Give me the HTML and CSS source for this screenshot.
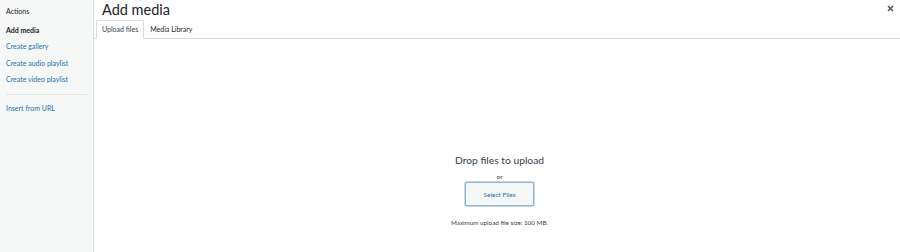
FILE: index.html
```html
<!DOCTYPE html>
<html lang="en">
<head>
  <meta charset="UTF-8" />
  <title>Add media</title>
  <link rel="stylesheet" href="styles.css">
</head>
<body>
  <div class="modal">
    <aside class="menu">
      <h3 class="menu-heading">Actions</h3>
      <a class="menu-item active">Add media</a>
      <a class="menu-item">Create gallery</a>
      <a class="menu-item">Create audio playlist</a>
      <a class="menu-item">Create video playlist</a>
      <div class="separator"></div>
      <a class="menu-item">Insert from URL</a>
    </aside>

    <section class="frame">
      <div class="frame-title">
        <h1>Add media</h1>
        <button class="close" aria-label="Close">
          <svg width="7" height="7" viewBox="0 0 7 7"><path d="M1 1L6 6M6 1L1 6" stroke="#555" stroke-width="1.6"/></svg>
        </button>
      </div>
      <nav class="tabs">
        <a class="tab active">Upload files</a>
        <a class="tab">Media Library</a>
      </nav>
      <div class="uploader">
        <p class="drop-title">Drop files to upload</p>
        <p class="or">or</p>
        <button class="select-btn">Select Files</button>
        <p class="max-size">Maximum upload file size: 100 MB.</p>
      </div>
    </section>
  </div>
</body>
</html>
```

FILE: styles.css
```css
* {
  box-sizing: border-box;
}

body {
  margin: 0;
  font-family: Lato, sans-serif;
  color: #1d2327;
  background: #fff;
}

.modal {
  display: flex;
  height: 252px;
}

.menu {
  width: 94px;
  flex-shrink: 0;
  background: #f6f7f7;
  border-right: 1px solid #dcdcde;
  padding: 6px 0 0;
  display: flex;
  flex-direction: column;
}

.menu-heading {
  margin: 0 0 6px;
  padding: 0 6px;
  font-size: 7px;
  font-weight: 400;
  line-height: 10px;
  color: #1d2327;
}

.menu-item {
  display: block;
  padding: 2.5px 6px;
  font-size: 7px;
  line-height: 11.5px;
  color: #2271b1;
}

.menu-item.active {
  color: #1d2327;
  font-weight: 700;
}

.separator {
  height: 1px;
  background: #e2e4e7;
  margin: 6px 6px 5px;
}

.frame {
  flex: 1;
  display: flex;
  flex-direction: column;
}

.frame-title {
  display: flex;
  justify-content: space-between;
  align-items: flex-start;
  padding: 0 6px 0 8px;
}

.frame-title h1 {
  margin: 0;
  font-size: 14.5px;
  font-weight: 400;
  line-height: 20px;
  color: #1d2327;
}

.close {
  border: none;
  background: none;
  padding: 0;
  margin-top: 5px;
  line-height: 0;
}

.tabs {
  display: flex;
  padding: 0 0 0 2px;
  border-bottom: 1px solid #dcdcde;
}

.tab {
  font-size: 7px;
  line-height: 11px;
  padding: 3px 5px;
  margin-bottom: -1px;
  color: #1d2327;
  border: 1px solid transparent;
}

.tab.active {
  border-color: #dcdcde;
  border-bottom-color: #fff;
  color: #3c434a;
}

.uploader {
  flex: 1;
  display: flex;
  flex-direction: column;
  align-items: center;
  padding: 114px 0 0 5px;
}

.drop-title {
  margin: 0;
  font-size: 10.3px;
  line-height: 14px;
  color: #3c434a;
}

.or {
  margin: 4.5px 0 1.5px;
  font-size: 6.5px;
  line-height: 9px;
  color: #3c434a;
}

.select-btn {
  width: 69px;
  height: 24px;
  font-family: inherit;
  font-size: 6.5px;
  color: #2271b1;
  background: #f6f7f7;
  border: 1px solid #8fb3d1;
  border-radius: 2px;
  box-shadow: 0 0 0 1px #c5d9ea;
}

.max-size {
  margin: 11.5px 0 0;
  font-size: 6.3px;
  line-height: 9px;
  color: #3c434a;
}
```
